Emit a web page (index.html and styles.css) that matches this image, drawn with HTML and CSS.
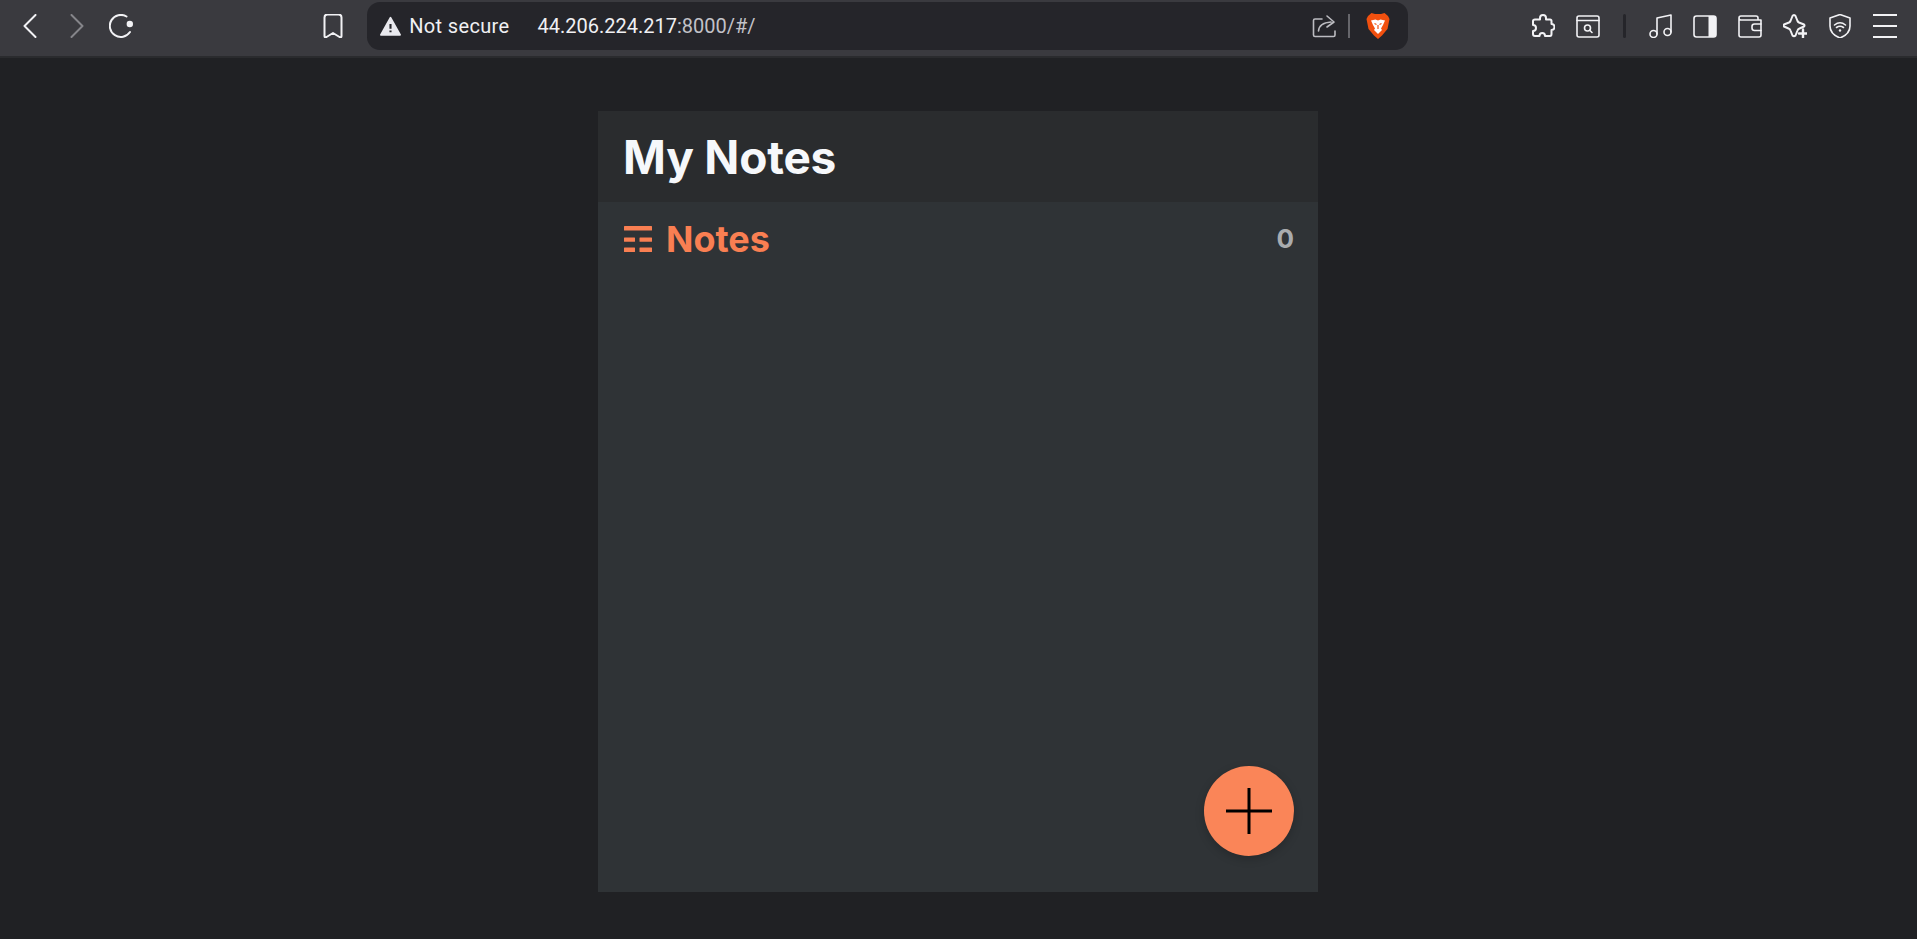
FILE: index.html
```html
<!DOCTYPE html>
<html lang="en">
<head>
    <meta charset="UTF-8">
    <meta name="viewport" content="width=device-width, initial-scale=1.0">
    <title>My Notes</title>
    <link rel="stylesheet" href="styles.css">
</head>
<body>
    <header class="toolbar">
        <div class="nav-group">
            <span class="tool">
                <svg viewBox="0 0 24 24" class="icon"><path d="M16.5 1 L5.5 12 L16.5 23"/></svg>
            </span>
            <span class="tool dim">
                <svg viewBox="0 0 24 24" class="icon"><path d="M7.5 1 L18.5 12 L7.5 23"/></svg>
            </span>
            <span class="tool">
                <svg viewBox="0 0 24 24" class="icon"><path d="M17.5 2.500 A11 11 0 1 0 21 18"/><circle cx="20.800" cy="10" r="3.200" class="solid"/></svg>
            </span>
        </div>
        <span class="tool bookmark">
            <svg viewBox="0 0 24 24" class="icon"><path d="M3.500 3.500 Q3.500 0.500 6.500 0.500 H17.500 Q20.500 0.500 20.500 3.500 V22 Q20.500 24 18.500 23 L12 19 L5.500 23 Q3.500 24 3.500 22 Z"/></svg>
        </span>
        <div class="address">
            <svg viewBox="0 0 24 24" class="warn"><path d="M12 2 L23 21.500 H1 Z" class="warn-fill"/><path d="M12 9 V14.500 M12 16.500 V18.500" class="warn-mark"/></svg>
            <span class="not-secure">Not secure</span>
            <span class="url">44.206.224.217<span class="url-rest">:8000/#/</span></span>
            <svg viewBox="0 0 24 24" class="icon share"><path d="M10 5 H3 Q1.500 5 1.500 6.500 V21 Q1.500 22.500 3 22.500 H21.500 Q23 22.500 23 21 V17"/><path d="M6.500 17 Q7 9 19 8 M15 2 L22 8 L15 13" /></svg>
            <span class="address-sep"></span>
            <svg viewBox="0 0 24 28" class="brave">
                <path d="M5.500 1 L9 2 H15 L18.500 1 L22 4 L23.500 7 L21.500 17 L16 23.500 L12 27 L8 23.500 L2.500 17 L0.500 7 L2 4 Z" class="brave-shield"/>
                <path d="M5 8.500 L9.500 7.500 L12 8.500 L14.500 7.500 L19 8.500 L17 13 L15 16.500 L16 18 L12 22 L8 18 L9 16.500 L7 13 Z" class="brave-face"/>
                <path d="M8.500 11.500 L10.500 12.500 M15.500 11.500 L13.500 12.500 M12 13 V17" class="brave-line"/>
            </svg>
        </div>
        <div class="tool-group">
            <span class="tool">
                <svg viewBox="0 0 24 24" class="icon"><path d="M9 4 C9 0 15 0 15 4 V5.500 H19 Q20.500 5.500 20.500 7 V10 C24.500 10 24.500 16 20.500 16 V20 Q20.500 22 19 22 H14 C14 18 8.500 18 8.500 22 H4 Q2 22 2 20 V17 C6 17 6 11 2 11 V7 Q2 5.500 4 5.500 H9 Z"/></svg>
            </span>
            <span class="tool">
                <svg viewBox="0 0 24 24" class="icon thin"><rect x="1" y="2" width="22" height="21" rx="2"/><path d="M1 6.500 H23"/><circle cx="11.500" cy="14" r="3"/><path d="M13.700 16.200 L16 18.500"/></svg>
            </span>
            <span class="tool-sep"></span>
            <span class="tool">
                <svg viewBox="0 0 24 24" class="icon thin"><circle cx="4.500" cy="20" r="3.500"/><circle cx="18.500" cy="18" r="3.500"/><path d="M8 20 V4 L22 1 V18"/></svg>
            </span>
            <span class="tool">
                <svg viewBox="0 0 24 24" class="icon thin"><rect x="1" y="2" width="22" height="21" rx="2.500"/><path d="M15.500 2 H20.500 Q23 2 23 4.500 V20.500 Q23 23 20.500 23 H15.500 Z" class="solid"/></svg>
            </span>
            <span class="tool">
                <svg viewBox="0 0 24 24" class="icon thin"><path d="M20 6 V4 Q20 2 18 2 H3 Q1 2 1 4 V21 Q1 23 3 23 H21 Q23 23 23 21 V6 H3 Q1 6 1 4"/><path d="M23 10 H16.500 Q14 10 14 12.500 V14 Q14 16.500 16.500 16.500 H23"/></svg>
            </span>
            <span class="tool">
                <svg viewBox="0 0 24 24" class="icon"><path d="M11 1 Q12 1 12.500 2 L14.500 7 Q15 8 16 8.500 L21 10.500 Q22 11.500 21 12.500 L16.500 14.500 Q15 15 14.500 16.500 L12.500 21.500 Q11 23 9.500 21.500 L7.500 16.500 Q7 15 5.500 14.500 L1 12.500 Q0 11.500 1 10.500 L6 8.500 Q7 8 7.500 7 L9.500 2 Q10 1 11 1 Z"/><path d="M20 15.500 V23.500 M16 19.500 H24" class="plus"/></svg>
            </span>
            <span class="tool">
                <svg viewBox="0 0 24 24" class="icon thin"><path d="M12 0.500 L22 4 V12 C22 18 17 22 12 24 C7 22 2 18 2 12 V4 Z"/><path d="M6.500 11 Q12 6.500 17.500 11 M8.500 13.500 Q12 11 15.500 13.500"/><circle cx="12" cy="16.500" r="1.200" class="solid"/></svg>
            </span>
            <span class="tool">
                <svg viewBox="0 0 24 24" class="icon"><path d="M0 1 H24 M0 12 H24 M0 23 H24"/></svg>
            </span>
        </div>
    </header>

    <main class="page">
        <section class="card">
            <div class="card-head">
                <h1>My Notes</h1>
            </div>
            <div class="card-body">
                <div class="notes-row">
                    <h2 class="notes-title">
                        <svg viewBox="0 0 28 26" class="notes-icon"><rect x="0" y="0" width="28" height="4.400" rx="0.500"/><rect x="0" y="11.400" width="11" height="4.400" rx="0.500"/><rect x="15.500" y="11.400" width="12.500" height="4.400" rx="0.500"/><rect x="0" y="21.600" width="11" height="4.400" rx="0.500"/><rect x="15.500" y="21.600" width="12.500" height="4.400" rx="0.500"/></svg>
                        Notes
                    </h2>
                    <span class="count">0</span>
                </div>
                <button class="add-btn">
                    <svg viewBox="0 0 46 46" class="add-icon"><path d="M23 0 V46 M0 23 H46"/></svg>
                </button>
            </div>
        </section>
    </main>
</body>
</html>
```

FILE: styles.css
```css
* {
    box-sizing: border-box;
}
html, body {
    height: 100%;
}
body {
    margin: 0;
    background-color: #202124;
    font-family: "Inter", "Liberation Sans", sans-serif;
    display: flex;
    flex-direction: column;
    overflow: hidden;
}

/* browser bar */
.toolbar {
    height: 58px;
    flex: none;
    display: flex;
    align-items: center;
    padding: 0 10px 4px 9px;
    background-color: #3a3a3f;
    border-bottom: 2px solid #2a2b2e;
}
.nav-group, .tool-group {
    display: flex;
    align-items: center;
}
.tool-group {
    margin-left: auto;
}
.tool {
    width: 44.800px;
    height: 30px;
    display: flex;
    align-items: center;
    justify-content: center;
}
.icon {
    width: 24px;
    height: 24px;
    fill: none;
    stroke: #f2f2f5;
    stroke-width: 2;
    stroke-linecap: round;
    stroke-linejoin: round;
}
.icon.thin {
    stroke-width: 1.600;
}
.icon .solid {
    fill: #f2f2f5;
    stroke: none;
}
.icon .plus {
    stroke-width: 2.400;
}
.dim .icon {
    stroke: #85858a;
}
.bookmark {
    margin-left: 167px;
    margin-right: 12px;
}
.tool-sep {
    width: 3px;
    height: 24px;
    background-color: #25252a;
    border-radius: 2px;
    margin-left: 13px;
    margin-right: 12px;
}
.address {
    width: 1041px;
    height: 48px;
    display: flex;
    align-items: center;
    padding: 0 18px 0 13px;
    background-color: #25252a;
    border-radius: 13px;
    color: #f0f0f3;
    font-family: "Roboto", "Liberation Sans", sans-serif;
    font-size: 20px;
}
.warn {
    width: 21px;
    height: 21px;
    flex: none;
}
.warn-fill {
    fill: #e9e9ee;
    stroke: #e9e9ee;
    stroke-width: 2;
    stroke-linejoin: round;
}
.warn-mark {
    fill: none;
    stroke: #25252a;
    stroke-width: 2.400;
}
.not-secure {
    margin-left: 8px;
    letter-spacing: 0.350px;
}
.url {
    margin-left: 28px;
}
.url-rest {
    color: #c2c2c8;
}
.share {
    margin-left: auto;
    stroke: #bcbcc1;
    stroke-width: 1.600;
    margin-right: -1px;
}
.address-sep {
    width: 2px;
    height: 24px;
    margin: 0 16px 0 13px;
    background-color: #66666b;
}
.brave {
    width: 24px;
    height: 28px;
    flex: none;
}
.brave-shield {
    fill: #f1500f;
}
.brave-face {
    fill: #ffffff;
}
.brave-line {
    fill: none;
    stroke: #f1500f;
    stroke-width: 1.200;
}

/* notes card */
.page {
    flex: 1;
    display: flex;
    justify-content: center;
    padding-top: 53px;
    padding-right: 1px;
    padding-bottom: 47px;
}
.card {
    width: 720px;
    display: flex;
    flex-direction: column;
    background-color: #2f3336;
}
.card-head {
    height: 91px;
    flex: none;
    display: flex;
    align-items: center;
    padding: 0 25px;
    background-color: #2a2c2e;
}
h1 {
    margin: 0;
    color: #f6f8fb;
    font-size: 46px;
    font-weight: 700;
    letter-spacing: -0.200px;
}
.card-body {
    flex: 1;
    position: relative;
    padding: 15px 24px 16px 26px;
}
.notes-row {
    display: flex;
    align-items: center;
    justify-content: space-between;
}
.notes-title {
    margin: 0;
    display: flex;
    align-items: center;
    gap: 14px;
    color: #f97f52;
    font-size: 36px;
    font-weight: 700;
}
.notes-icon {
    width: 28px;
    height: 26px;
    fill: #f97f52;
}
.count {
    margin-bottom: 2px;
    color: #a9acae;
    font-size: 26px;
    font-weight: 700;
}
.add-btn {
    position: absolute;
    right: 24px;
    bottom: 36px;
    width: 90px;
    height: 90px;
    padding: 0;
    border: none;
    border-radius: 50%;
    background-color: #fa8558;
    box-shadow: 0 3px 10px rgba(0, 0, 0, 0.2);
    cursor: pointer;
    display: flex;
    align-items: center;
    justify-content: center;
}
.add-icon {
    width: 46px;
    height: 46px;
    fill: none;
    stroke: #000000;
    stroke-width: 3;
}
```
